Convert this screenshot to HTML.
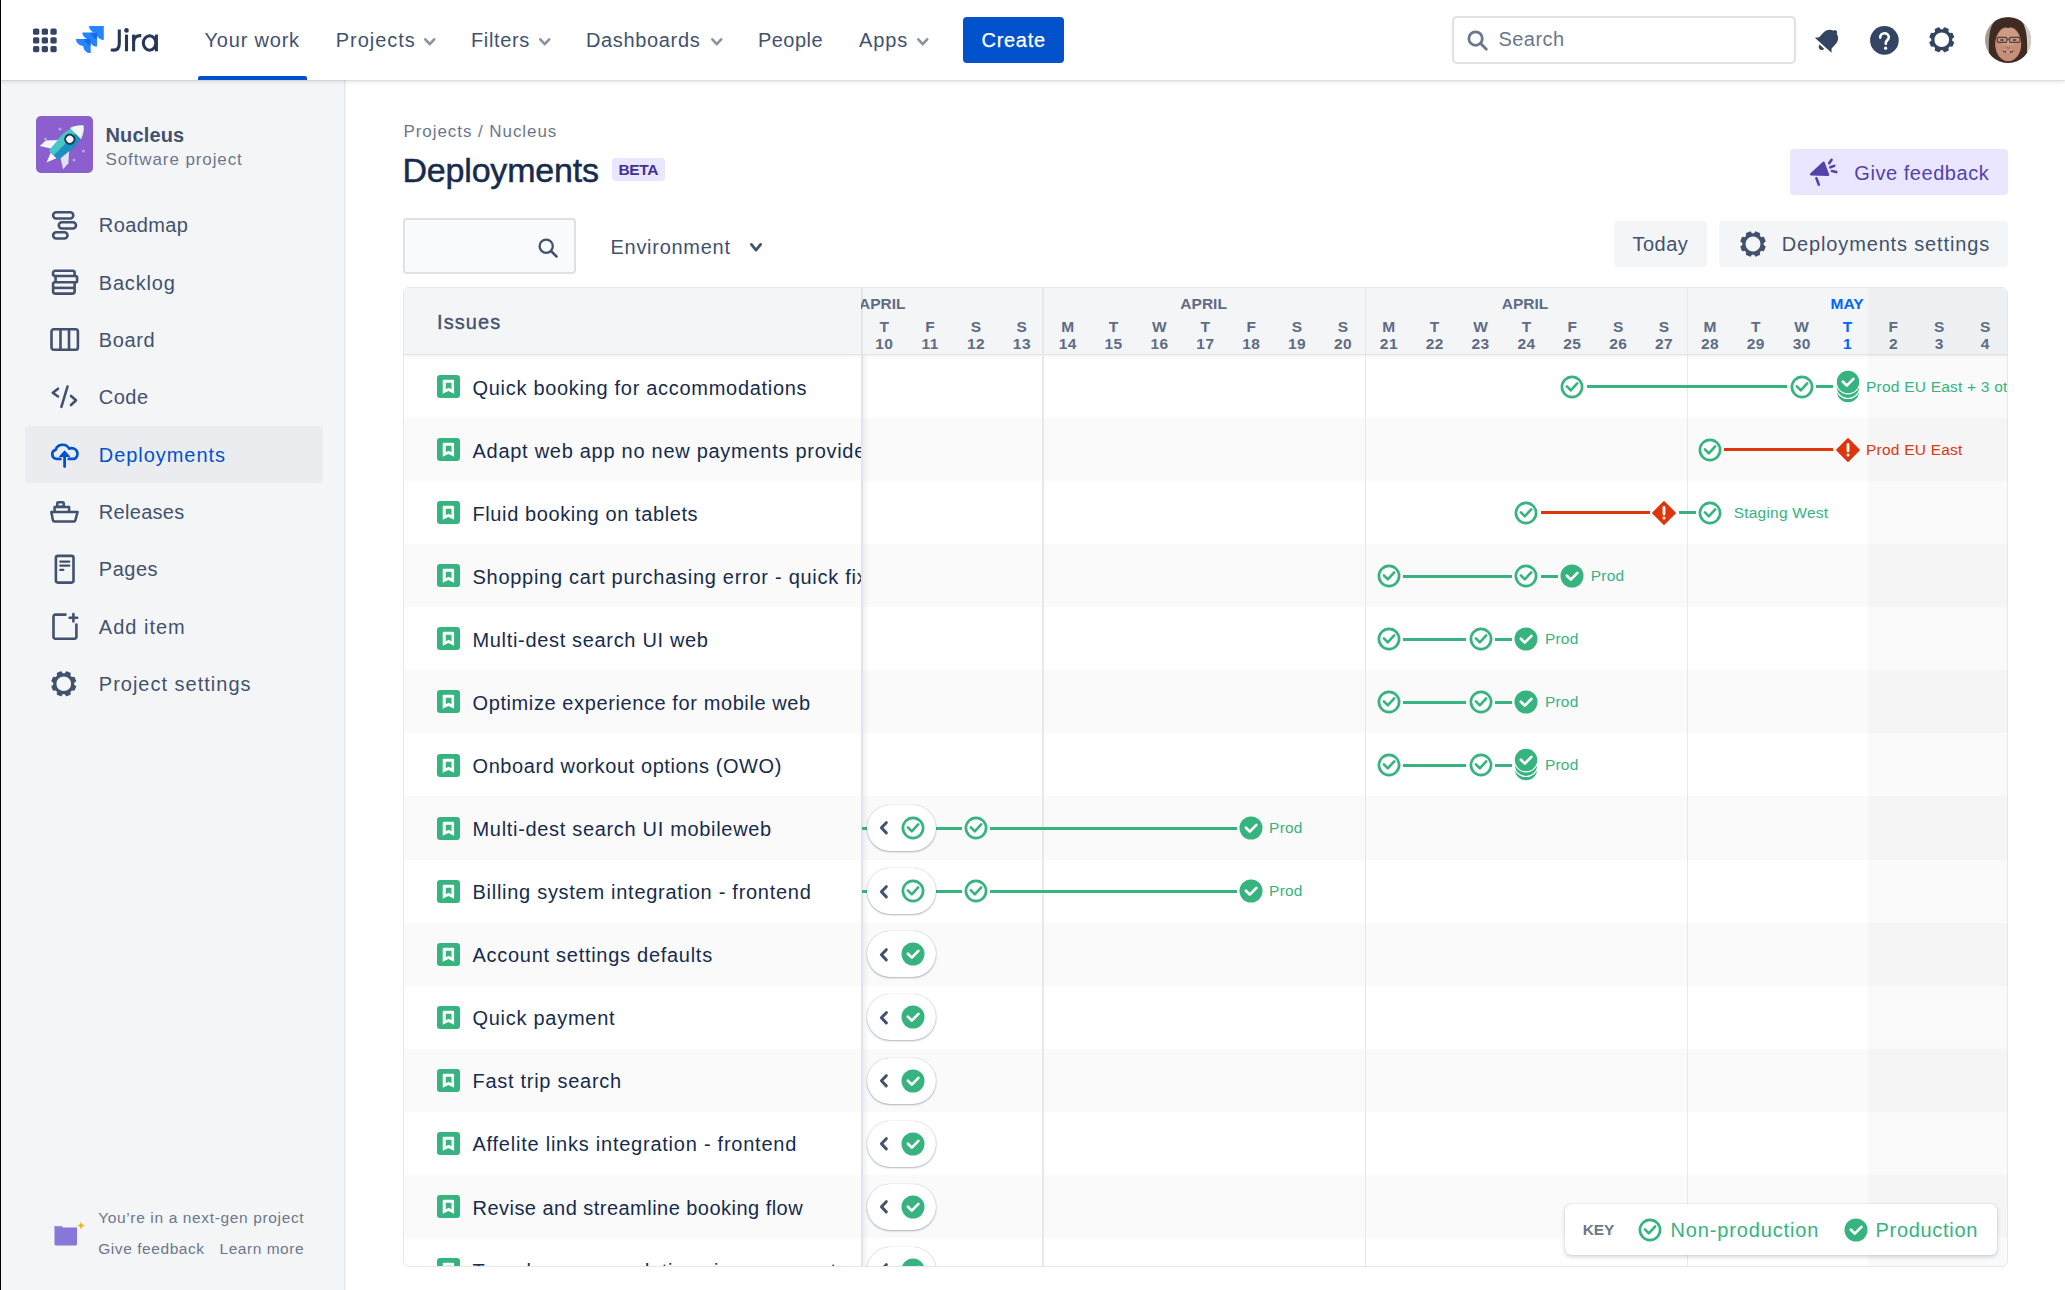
<!DOCTYPE html><html><head><meta charset="utf-8"><style>
*{box-sizing:border-box;margin:0;padding:0}
html,body{width:2065px;height:1290px;overflow:hidden;background:#fff;font-family:"Liberation Sans", sans-serif}
.t{position:absolute;white-space:nowrap}
.a{position:absolute}
svg{position:absolute;overflow:visible}
</style></head><body><div class="a" style="left:0;top:0;width:1px;height:1290px;background:#000;z-index:50"></div><div class="a" style="left:0;top:0;width:2065px;height:80px;background:#fff;z-index:10;box-shadow:0 1px 1px rgba(9,30,66,0.07),0 2px 4px rgba(9,30,66,0.11)"></div><svg style="left:0;top:0;z-index:11" width="120" height="80" fill="#344563"><rect x="33.0" y="28.5" width="6.3" height="6.3" rx="1.6"/><rect x="33.0" y="37.2" width="6.3" height="6.3" rx="1.6"/><rect x="33.0" y="45.9" width="6.3" height="6.3" rx="1.6"/><rect x="41.7" y="28.5" width="6.3" height="6.3" rx="1.6"/><rect x="41.7" y="37.2" width="6.3" height="6.3" rx="1.6"/><rect x="41.7" y="45.9" width="6.3" height="6.3" rx="1.6"/><rect x="50.4" y="28.5" width="6.3" height="6.3" rx="1.6"/><rect x="50.4" y="37.2" width="6.3" height="6.3" rx="1.6"/><rect x="50.4" y="45.9" width="6.3" height="6.3" rx="1.6"/></svg><svg style="left:0;top:0;z-index:11" width="110" height="60"><path transform="translate(89.1 26)" d="M0 0 H14.7 V14 C10.6 14 7.3 10.8 7.3 6.8 C3.3 6.8 0 3.8 0 0Z" fill="#2684FF"/><path transform="translate(82.4 32.6)" d="M0 0 H14.7 V14 C10.6 14 7.3 10.8 7.3 6.8 C3.3 6.8 0 3.8 0 0Z" fill="#2684FF"/><path transform="translate(82.4 32.6)" d="M7.9 0 H14.7 V7 C12.2 6.2 9.8 3.6 7.9 0Z" fill="#0052CC" opacity="0.45"/><path transform="translate(76 39.1)" d="M0 0 H14.7 V14 C10.6 14 7.3 10.8 7.3 6.8 C3.3 6.8 0 3.8 0 0Z" fill="#2684FF"/><path transform="translate(76 39.1)" d="M7.9 0 H14.7 V7 C12.2 6.2 9.8 3.6 7.9 0Z" fill="#0052CC" opacity="0.45"/></svg><svg style="left:0;top:0;z-index:11" width="170" height="80"><g fill="none" stroke="#253858" stroke-width="3.1">
<path d="M119.3 29.4 V43.5 C119.3 48.3 116.8 50.1 113.8 50.1 C112.6 50.1 111.6 49.9 110.9 49.6"/>
<path d="M126.5 34.6 V51.3"/><path d="M133.6 34.6 V51.3"/><path d="M133.6 41 C134.3 37 137.2 35.4 141.3 35.7"/>
<ellipse cx="149.6" cy="43" rx="6.3" ry="7.2"/><path d="M156.4 34.6 V51.3"/></g>
<circle cx="126.5" cy="30.4" r="2.3" fill="#253858"/></svg><div class="t " style="left:204.5px;top:30.0px;font-size:20px;line-height:20px;color:#42526E;font-weight:400;letter-spacing:0.8px;z-index:11">Your work</div><div class="a" style="left:198px;top:76px;width:109px;height:4px;background:#0052CC;border-radius:2px 2px 0 0;z-index:11"></div><div class="t " style="left:335.8px;top:30.0px;font-size:20px;line-height:20px;color:#42526E;font-weight:400;letter-spacing:0.95px;z-index:11">Projects</div><svg style="left:424px;top:37.5px;z-index:11" width="11.5" height="7.5"><path d="M1.3 1.3 L5.75 6.20 L10.20 1.3" fill="none" stroke="#8993A4" stroke-width="2.6" stroke-linecap="round" stroke-linejoin="round"/></svg><div class="t " style="left:471.0px;top:30.0px;font-size:20px;line-height:20px;color:#42526E;font-weight:400;letter-spacing:0.65px;z-index:11">Filters</div><svg style="left:539px;top:37.5px;z-index:11" width="11.5" height="7.5"><path d="M1.3 1.3 L5.75 6.20 L10.20 1.3" fill="none" stroke="#8993A4" stroke-width="2.6" stroke-linecap="round" stroke-linejoin="round"/></svg><div class="t " style="left:586.0px;top:30.0px;font-size:20px;line-height:20px;color:#42526E;font-weight:400;letter-spacing:0.65px;z-index:11">Dashboards</div><svg style="left:711.3px;top:37.5px;z-index:11" width="11.5" height="7.5"><path d="M1.3 1.3 L5.75 6.20 L10.20 1.3" fill="none" stroke="#8993A4" stroke-width="2.6" stroke-linecap="round" stroke-linejoin="round"/></svg><div class="t " style="left:758.0px;top:30.0px;font-size:20px;line-height:20px;color:#42526E;font-weight:400;letter-spacing:0.45px;z-index:11">People</div><div class="t " style="left:859.0px;top:30.0px;font-size:20px;line-height:20px;color:#42526E;font-weight:400;letter-spacing:0.9px;z-index:11">Apps</div><svg style="left:917.3px;top:37.5px;z-index:11" width="11.5" height="7.5"><path d="M1.3 1.3 L5.75 6.20 L10.20 1.3" fill="none" stroke="#8993A4" stroke-width="2.6" stroke-linecap="round" stroke-linejoin="round"/></svg><div class="a" style="left:963px;top:17px;width:101px;height:46px;background:#0052CC;border-radius:4px;z-index:11"></div><div class="t " style="left:981.5px;top:29.8px;font-size:20px;line-height:20px;color:#fff;font-weight:400;letter-spacing:0.7px;z-index:12;-webkit-text-stroke:0.25px #fff">Create</div><div class="a" style="left:1452px;top:16px;width:344px;height:48px;border:2.5px solid #DFE1E6;border-radius:5px;background:#fff;z-index:11"></div><svg style="left:1467px;top:30px;z-index:12" width="22" height="21"><circle cx="8.6" cy="8.6" r="6.7" fill="none" stroke="#6B778C" stroke-width="2.8"/><path d="M13.6 13.6 L19.3 19.3" stroke="#6B778C" stroke-width="2.8" stroke-linecap="round"/></svg><div class="t " style="left:1498.5px;top:29.4px;font-size:20px;line-height:20px;color:#6B778C;font-weight:400;letter-spacing:0.45px;z-index:12">Search</div><svg style="left:1814px;top:26px;z-index:12" width="28" height="28" viewBox="0 0 26 26">
<g transform="rotate(42 13 13)"><path d="M13 1.3 c1.1 0 1.9 .8 1.9 1.8 c3.7 .9 5.9 4 5.9 7.8 v5.8 l2.6 3 H2.6 l2.6 -3 v-5.8 c0 -3.8 2.2 -6.9 5.9 -7.8 c0 -1 .8 -1.8 1.9 -1.8z" fill="#344563"/>
<path d="M10 21.4 h6 c0 1.8 -1.3 3.1 -3 3.1 s-3 -1.3 -3 -3.1z" fill="#344563"/></g></svg><svg style="left:1870px;top:25.5px;z-index:12" width="29" height="29" viewBox="0 0 29 29">
<circle cx="14.4" cy="14.4" r="14.3" fill="#344563"/>
<path d="M10.2 11.6 c0-2.5 1.9-4.3 4.3-4.3 s4.3 1.7 4.3 4 c0 2.7-3 3.2-3 5.6 v.8" fill="none" stroke="#fff" stroke-width="2.6" stroke-linecap="round"/>
<circle cx="15.6" cy="22.2" r="1.6" fill="#fff"/></svg><svg style="left:1929px;top:27px;z-index:12" width="25.5" height="25.5"><g fill="#344563" stroke="#344563" stroke-width="1.33" stroke-linejoin="round"><path d="M10.10 3.98 L10.81 0.82 L14.69 0.82 L15.40 3.98Z" transform="rotate(22.5 12.75 12.75)"/><path d="M10.10 3.98 L10.81 0.82 L14.69 0.82 L15.40 3.98Z" transform="rotate(67.5 12.75 12.75)"/><path d="M10.10 3.98 L10.81 0.82 L14.69 0.82 L15.40 3.98Z" transform="rotate(112.5 12.75 12.75)"/><path d="M10.10 3.98 L10.81 0.82 L14.69 0.82 L15.40 3.98Z" transform="rotate(157.5 12.75 12.75)"/><path d="M10.10 3.98 L10.81 0.82 L14.69 0.82 L15.40 3.98Z" transform="rotate(202.5 12.75 12.75)"/><path d="M10.10 3.98 L10.81 0.82 L14.69 0.82 L15.40 3.98Z" transform="rotate(247.5 12.75 12.75)"/><path d="M10.10 3.98 L10.81 0.82 L14.69 0.82 L15.40 3.98Z" transform="rotate(292.5 12.75 12.75)"/><path d="M10.10 3.98 L10.81 0.82 L14.69 0.82 L15.40 3.98Z" transform="rotate(337.5 12.75 12.75)"/></g><circle cx="12.75" cy="12.75" r="8.93" fill="none" stroke="#344563" stroke-width="3.16"/></svg><svg style="left:1985px;top:17px;z-index:12" width="46" height="46" viewBox="0 0 46 46">
<defs><clipPath id="avc"><circle cx="23" cy="23" r="23"/></clipPath></defs>
<g clip-path="url(#avc)">
<rect width="46" height="46" fill="#A39E94"/>
<rect x="36" y="8" width="10" height="30" fill="#CFCDC6"/>
<path d="M5 46 C3 30 3 10 10 4 C15 -1 31 -1 36 4 C43 10 43 30 41 46Z" fill="#3F2B22"/>
<ellipse cx="23.2" cy="27" rx="13" ry="17.3" fill="#C68F7A"/>
<ellipse cx="23.2" cy="20" rx="10" ry="9" fill="#CE9A86"/>
<path d="M10 14 C12 7 20 5.5 23 9.5 C27 5.5 35 7 36.5 15 C33 10 27 9.5 23 11 C19 9.5 13 10 10 14Z" fill="#3F2B22"/>
<g fill="none" stroke="#4E403B" stroke-width="1.2"><rect x="12.2" y="20.4" width="9.6" height="5" rx="1.2"/><rect x="24.6" y="20.4" width="10.4" height="5" rx="1.2"/><path d="M21.8 22 H24.6"/></g>
<ellipse cx="17" cy="23" rx="2" ry="1" fill="#5a3f36"/><ellipse cx="29.5" cy="23" rx="2" ry="1" fill="#5a3f36"/>
<path d="M21.5 30.5 Q23.2 32 25 30.5" fill="none" stroke="#8a5a4a" stroke-width="1"/>
<path d="M16.5 33.5 Q23.2 39 30 33.5 Q23.2 35.5 16.5 33.5Z" fill="#6b3328"/>
<rect x="21" y="34.6" width="4" height="1.2" fill="#d8d8d0"/>
</g></svg><div class="a" style="left:1px;top:80px;width:345px;height:1210px;background:#F4F5F7;box-shadow:inset -1px 0 0 #EFF0F3,inset -2px 0 0 #E8E9ED"></div><svg style="left:36px;top:116px" width="57" height="57" viewBox="0 0 57 57">
<rect width="57" height="57" rx="5" fill="#8C5FCF"/>
<circle cx="24" cy="13" r="1.6" fill="#B89DE8"/><circle cx="9.5" cy="23" r="1.6" fill="#B89DE8"/><circle cx="47.5" cy="35" r="1.6" fill="#B89DE8"/><circle cx="38" cy="44" r="1.6" fill="#B89DE8"/><circle cx="29" cy="47.5" r="1.6" fill="#B89DE8"/>
<g transform="translate(28.5 28.5) rotate(45) translate(-28.5 -28.5)">
<path d="M28.5 1.5 C36.5 9 37.8 20 37 31 L35 44 L22 44 L20 31 C19.2 20 20.5 9 28.5 1.5Z" fill="#1A8FC0"/>
<path d="M28.5 1.5 C20.5 9 19.2 20 20 31 L22 44 L28.5 44Z" fill="#4BC6C6"/>
<path d="M28.5 1.5 C32.5 5 35 9 36.2 13 L20.8 13 C22 9 24.5 5 28.5 1.5Z" fill="#F4F5F7"/>
<path d="M34.5 13 L36.2 13 C35 9 32.5 5 28.5 1.5 C31 5 33.5 9 34.5 13Z" fill="#DDE3F0"/>
<path d="M20.5 30 L12.5 39 L12 47 L21.5 41Z" fill="#F4F5F7"/>
<path d="M36.5 30 L44.5 39 L45 47 L35.5 41Z" fill="#DDE3F0"/>
<path d="M24.5 44 L32.5 44 L28.5 54Z" fill="#F4F5F7"/>
<circle cx="28.5" cy="21" r="4.6" fill="#fff" stroke="#253858" stroke-width="2.1"/>
</g></svg><div class="t " style="left:105.5px;top:125.0px;font-size:20px;line-height:20px;color:#42526E;font-weight:700;letter-spacing:0.15px;">Nucleus</div><div class="t " style="left:105.5px;top:150.5px;font-size:17px;line-height:17px;color:#6B778C;font-weight:400;letter-spacing:0.9px;">Software project</div><div class="a" style="left:25px;top:426px;width:298px;height:57px;background:#EBECF0;border-radius:4px"></div><div class="t " style="left:98.8px;top:215.3px;font-size:20px;line-height:20px;color:#42526E;font-weight:400;letter-spacing:0.4px;">Roadmap</div><div class="t " style="left:98.8px;top:272.6px;font-size:20px;line-height:20px;color:#42526E;font-weight:400;letter-spacing:0.8px;">Backlog</div><div class="t " style="left:98.8px;top:330.0px;font-size:20px;line-height:20px;color:#42526E;font-weight:400;letter-spacing:0.6px;">Board</div><div class="t " style="left:98.8px;top:387.3px;font-size:20px;line-height:20px;color:#42526E;font-weight:400;letter-spacing:0.5px;">Code</div><div class="t " style="left:98.8px;top:444.7px;font-size:20px;line-height:20px;color:#0052CC;font-weight:400;letter-spacing:0.95px;">Deployments</div><div class="t " style="left:98.8px;top:502.0px;font-size:20px;line-height:20px;color:#42526E;font-weight:400;letter-spacing:0.3px;">Releases</div><div class="t " style="left:98.8px;top:559.4px;font-size:20px;line-height:20px;color:#42526E;font-weight:400;letter-spacing:0.5px;">Pages</div><div class="t " style="left:98.8px;top:616.7px;font-size:20px;line-height:20px;color:#42526E;font-weight:400;letter-spacing:1.0px;">Add item</div><div class="t " style="left:98.8px;top:674.1px;font-size:20px;line-height:20px;color:#42526E;font-weight:400;letter-spacing:1.0px;">Project settings</div><svg style="left:50px;top:209px" width="30" height="32"><g fill="none" stroke="#42526E" stroke-width="2.6">
<rect x="3.1" y="3.2" width="20.2" height="6.3" rx="3.15"/><rect x="8.8" y="13.2" width="17.2" height="6.3" rx="3.15"/><rect x="3.1" y="23.2" width="14.4" height="6.3" rx="3.15"/></g></svg><svg style="left:50px;top:268px" width="30" height="30"><g fill="none" stroke="#42526E" stroke-width="2.6" stroke-linejoin="round">
<path d="M3.1 8 V4.8 a2 2 0 0 1 2-2 H22.6 a2 2 0 0 1 2 2 V8"/>
<path d="M3.1 8 H25.5 a1.6 1.6 0 0 1 1.6 1.6 V12.7 a1.6 1.6 0 0 1 -1.6 1.6 H3.1"/>
<path d="M5.6 8 V14.3"/>
<path d="M3.1 14.3 V23.6 a2 2 0 0 0 2 2 H22.6 a2 2 0 0 0 2-2 V14.3"/>
<path d="M3.1 19.9 H24.6"/></g></svg><svg style="left:49px;top:327px" width="32" height="26"><g fill="none" stroke="#42526E" stroke-width="2.6">
<rect x="2.5" y="2.3" width="26.4" height="20.4" rx="2.2"/><path d="M11.5 2.3 V22.7 M20 2.3 V22.7"/></g></svg><svg style="left:50px;top:384px" width="30" height="26"><g fill="none" stroke="#42526E" stroke-width="2.6" stroke-linecap="round" stroke-linejoin="round">
<path d="M8 4.7 L2.8 8.8 L8 12.5"/><path d="M17.5 2.5 L11.4 22.8"/><path d="M21 11.9 L26 16.3 L21 21"/></g></svg><svg style="left:49px;top:440px" width="32" height="29"><g fill="none" stroke="#0052CC" stroke-width="2.7" stroke-linecap="butt" stroke-linejoin="round" transform="translate(0 1.3)">
<path d="M12.6 17.6 H7.4 A4.6 4.6 0 0 1 6.6 8.6 A7.4 7.4 0 0 1 20.2 7.4 A5.3 5.1 0 0 1 25.2 17.6 H18.6"/></g>
<path d="M15.6 26.6 V13.5" stroke="#0052CC" stroke-width="2.8" stroke-linecap="round"/><path d="M10.8 16.4 L15.6 11.2 L20.4 16.4Z" fill="#0052CC" stroke="#0052CC" stroke-width="1.2" stroke-linejoin="round"/></svg><svg style="left:49px;top:500px" width="32" height="24"><g fill="none" stroke="#42526E" stroke-width="2.5" stroke-linejoin="round">
<rect x="8.2" y="2.2" width="6.6" height="4.6" rx="1.2"/><path d="M5.6 11.8 V7.1 H20.1 V11.8"/>
<path d="M2.3 12 H28.6 L26.3 20.4 a1.4 1.4 0 0 1 -1.3 1 H5.3 a1.4 1.4 0 0 1 -1.3 -1 Z"/></g></svg><svg style="left:53px;top:553px" width="24" height="32"><g fill="none" stroke="#42526E" stroke-width="2.6">
<rect x="2.9" y="2.9" width="17.6" height="26.7" rx="2"/></g><g stroke="#42526E" stroke-width="2.3" stroke-linecap="round"><path d="M7.3 8.6 H16.3 M7.3 12.6 H16.3 M7.3 16.9 H10.3"/></g></svg><svg style="left:50px;top:611px" width="30" height="30"><g fill="none" stroke="#42526E" stroke-width="2.6" stroke-linecap="round" stroke-linejoin="round">
<path d="M15.5 3.6 H5.3 a1.8 1.8 0 0 0 -1.8 1.8 V25.9 a1.8 1.8 0 0 0 1.8 1.8 H24.6 a1.8 1.8 0 0 0 1.8 -1.8 V13.5"/>
<path d="M23.4 3 V10.5 M19.6 6.8 H27.2"/></g></svg><svg style="left:51.3px;top:670.8px;z-index:12" width="25.5" height="25.5"><g fill="#42526E" stroke="#42526E" stroke-width="1.33" stroke-linejoin="round"><path d="M10.10 3.98 L10.81 0.82 L14.69 0.82 L15.40 3.98Z" transform="rotate(22.5 12.75 12.75)"/><path d="M10.10 3.98 L10.81 0.82 L14.69 0.82 L15.40 3.98Z" transform="rotate(67.5 12.75 12.75)"/><path d="M10.10 3.98 L10.81 0.82 L14.69 0.82 L15.40 3.98Z" transform="rotate(112.5 12.75 12.75)"/><path d="M10.10 3.98 L10.81 0.82 L14.69 0.82 L15.40 3.98Z" transform="rotate(157.5 12.75 12.75)"/><path d="M10.10 3.98 L10.81 0.82 L14.69 0.82 L15.40 3.98Z" transform="rotate(202.5 12.75 12.75)"/><path d="M10.10 3.98 L10.81 0.82 L14.69 0.82 L15.40 3.98Z" transform="rotate(247.5 12.75 12.75)"/><path d="M10.10 3.98 L10.81 0.82 L14.69 0.82 L15.40 3.98Z" transform="rotate(292.5 12.75 12.75)"/><path d="M10.10 3.98 L10.81 0.82 L14.69 0.82 L15.40 3.98Z" transform="rotate(337.5 12.75 12.75)"/></g><circle cx="12.75" cy="12.75" r="8.93" fill="none" stroke="#42526E" stroke-width="3.16"/></svg><svg style="left:53px;top:1221px" width="32" height="25" viewBox="0 0 32 25">
<path d="M1.5 5 h7 l1.5 1.5 h14 v16.5 c0 .8-.6 1.5-1.5 1.5 h-19.5 c-.8 0-1.5-.7-1.5-1.5z" fill="#8777D9"/>
<path d="M1.5 5 h7 l1.5 1.5 h-8.5z" fill="#998DD9"/>
<path d="M28 0.5 l1 3 l3 1 l-3 1 l-1 3 l-1 -3 l-3 -1 l3 -1z" fill="#FFAB00"/>
</svg><div class="t " style="left:98.2px;top:1209.7px;font-size:15.5px;line-height:15.5px;color:#6B778C;font-weight:400;letter-spacing:0.64px;">You’re in a next-gen project</div><div class="t " style="left:98.2px;top:1240.9px;font-size:15.5px;line-height:15.5px;color:#6B778C;font-weight:400;letter-spacing:0.57px;">Give feedback</div><div class="t " style="left:219.6px;top:1240.9px;font-size:15.5px;line-height:15.5px;color:#6B778C;font-weight:400;letter-spacing:0.52px;">Learn more</div><div class="t " style="left:403.5px;top:123.2px;font-size:17px;line-height:17px;color:#6B778C;font-weight:400;letter-spacing:0.93px;">Projects / Nucleus</div><div class="t " style="left:402.5px;top:153.1px;font-size:34px;line-height:34px;color:#172B4D;font-weight:400;letter-spacing:-0.2px;-webkit-text-stroke:0.5px #172B4D">Deployments</div><div class="a" style="left:612px;top:157.5px;width:53px;height:23px;background:#EAE6FF;border-radius:4px"></div><div class="t " style="left:618.5px;top:161.6px;font-size:15.5px;line-height:15.5px;color:#403294;font-weight:700;letter-spacing:-0.35px;">BETA</div><div class="a" style="left:1790px;top:149px;width:218px;height:46px;background:#EAE6FF;border-radius:4px"></div><svg style="left:1808px;top:157px" width="32" height="30" viewBox="0 0 32 30">
<path d="M3 17.3 L15.6 5.6 L20.2 17.8 Z" fill="#5243AA" stroke="#5243AA" stroke-width="2.2" stroke-linejoin="round"/>
<path d="M8.4 21.3 L10.8 27.6" stroke="#5243AA" stroke-width="2.6" stroke-linecap="round"/>
<path d="M23.6 2.8 L21.2 6.3 M26.2 8.9 L22.3 10.3 M28.3 15.1 L23.9 14" stroke="#5243AA" stroke-width="2.6" stroke-linecap="round"/>
</svg><div class="t " style="left:1854.3px;top:162.5px;font-size:20px;line-height:20px;color:#5243AA;font-weight:400;letter-spacing:0.55px;">Give feedback</div><div class="a" style="left:403px;top:218px;width:173px;height:56px;border:2.5px solid #DFE1E6;border-radius:4px;background:#FAFBFC"></div><svg style="left:538px;top:237.5px" width="21" height="20"><circle cx="8.2" cy="8.2" r="6.6" fill="none" stroke="#42526E" stroke-width="2.3"/><path d="M13 13 L18.5 18.5" stroke="#42526E" stroke-width="2.5" stroke-linecap="round"/></svg><div class="t " style="left:610.5px;top:236.9px;font-size:20px;line-height:20px;color:#42526E;font-weight:400;letter-spacing:0.72px;">Environment</div><svg style="left:749.5px;top:243px;z-index:11" width="12" height="8.5"><path d="M1.4 1.4 L6.00 7.10 L10.60 1.4" fill="none" stroke="#42526E" stroke-width="2.8" stroke-linecap="round" stroke-linejoin="round"/></svg><div class="a" style="left:1614px;top:221px;width:93px;height:46px;background:#F4F5F7;border-radius:4px"></div><div class="t " style="left:1632.5px;top:234.1px;font-size:20px;line-height:20px;color:#42526E;font-weight:400;letter-spacing:0.5px;">Today</div><div class="a" style="left:1719px;top:221px;width:289px;height:46px;background:#F4F5F7;border-radius:4px"></div><svg style="left:1739.5px;top:230.5px;z-index:12" width="26" height="26"><g fill="#42526E" stroke="#42526E" stroke-width="1.35" stroke-linejoin="round"><path d="M10.30 4.06 L11.02 0.83 L14.98 0.83 L15.70 4.06Z" transform="rotate(22.5 13.0 13.0)"/><path d="M10.30 4.06 L11.02 0.83 L14.98 0.83 L15.70 4.06Z" transform="rotate(67.5 13.0 13.0)"/><path d="M10.30 4.06 L11.02 0.83 L14.98 0.83 L15.70 4.06Z" transform="rotate(112.5 13.0 13.0)"/><path d="M10.30 4.06 L11.02 0.83 L14.98 0.83 L15.70 4.06Z" transform="rotate(157.5 13.0 13.0)"/><path d="M10.30 4.06 L11.02 0.83 L14.98 0.83 L15.70 4.06Z" transform="rotate(202.5 13.0 13.0)"/><path d="M10.30 4.06 L11.02 0.83 L14.98 0.83 L15.70 4.06Z" transform="rotate(247.5 13.0 13.0)"/><path d="M10.30 4.06 L11.02 0.83 L14.98 0.83 L15.70 4.06Z" transform="rotate(292.5 13.0 13.0)"/><path d="M10.30 4.06 L11.02 0.83 L14.98 0.83 L15.70 4.06Z" transform="rotate(337.5 13.0 13.0)"/></g><circle cx="13.0" cy="13.0" r="9.10" fill="none" stroke="#42526E" stroke-width="3.22"/></svg><div class="t " style="left:1781.8px;top:234.1px;font-size:20px;line-height:20px;color:#42526E;font-weight:400;letter-spacing:0.85px;">Deployments settings</div><div class="a" style="left:403px;top:287px;width:1605px;height:980px;border:1px solid #E5E7EB;border-radius:6px;overflow:hidden;background:#fff"><div class="a" style="left:0.00px;top:0.00px;width:2100.00px;height:67.00px;background:#F4F5F7"></div><div class="a" style="left:0.00px;top:130.07px;width:2100.00px;height:63.07px;background:#FAFAFA"></div><div class="a" style="left:0.00px;top:256.21px;width:2100.00px;height:63.07px;background:#FAFAFA"></div><div class="a" style="left:0.00px;top:382.35px;width:2100.00px;height:63.07px;background:#FAFAFA"></div><div class="a" style="left:0.00px;top:508.49px;width:2100.00px;height:63.07px;background:#FAFAFA"></div><div class="a" style="left:0.00px;top:634.63px;width:2100.00px;height:63.07px;background:#FAFAFA"></div><div class="a" style="left:0.00px;top:760.77px;width:2100.00px;height:63.07px;background:#FAFAFA"></div><div class="a" style="left:0.00px;top:886.91px;width:2100.00px;height:63.07px;background:#FAFAFA"></div><div class="a" style="left:0.00px;top:65.80px;width:2100.00px;height:1.40px;background:#E2E4E9"></div><div class="a" style="left:0.00px;top:67.20px;width:2100.00px;height:2.50px;background:linear-gradient(rgba(9,30,66,0.05),rgba(9,30,66,0))"></div><div class="a" style="left:1464.00px;top:0.00px;width:300.00px;height:1290.00px;background:rgba(10,30,20,0.022)"></div><div class="a" style="left:638.30px;top:0.00px;width:1.30px;height:1290.00px;background:#E6E8EC"></div><div class="a" style="left:960.90px;top:0.00px;width:1.30px;height:1290.00px;background:#E6E8EC"></div><div class="a" style="left:1283.00px;top:0.00px;width:1.30px;height:1290.00px;background:#E6E8EC"></div><div class="a" style="left:457.00px;top:0.00px;width:1.60px;height:1290.00px;background:#E2E4E9"></div><div class="a" style="left:458.60px;top:67.00px;width:6.00px;height:1290.00px;background:linear-gradient(90deg,rgba(9,30,66,0.06),rgba(9,30,66,0))"></div><div class="t " style="left:33.0px;top:23.9px;font-size:20px;line-height:20px;color:#42526E;font-weight:400;letter-spacing:1.1px;-webkit-text-stroke:0.35px #42526E">Issues</div><div class="t" style="left:450.3px;top:30.9px;width:60px;text-align:center;font-size:15.5px;line-height:15.5px;font-weight:700;color:#5E6C84;letter-spacing:0.2px">T</div><div class="t" style="left:450.3px;top:48.1px;width:60px;text-align:center;font-size:15.5px;line-height:15.5px;font-weight:700;color:#5E6C84;letter-spacing:0.4px">10</div><div class="t" style="left:496.2px;top:30.9px;width:60px;text-align:center;font-size:15.5px;line-height:15.5px;font-weight:700;color:#5E6C84;letter-spacing:0.2px">F</div><div class="t" style="left:496.2px;top:48.1px;width:60px;text-align:center;font-size:15.5px;line-height:15.5px;font-weight:700;color:#5E6C84;letter-spacing:0.4px">11</div><div class="t" style="left:542.0px;top:30.9px;width:60px;text-align:center;font-size:15.5px;line-height:15.5px;font-weight:700;color:#5E6C84;letter-spacing:0.2px">S</div><div class="t" style="left:542.0px;top:48.1px;width:60px;text-align:center;font-size:15.5px;line-height:15.5px;font-weight:700;color:#5E6C84;letter-spacing:0.4px">12</div><div class="t" style="left:587.9px;top:30.9px;width:60px;text-align:center;font-size:15.5px;line-height:15.5px;font-weight:700;color:#5E6C84;letter-spacing:0.2px">S</div><div class="t" style="left:587.9px;top:48.1px;width:60px;text-align:center;font-size:15.5px;line-height:15.5px;font-weight:700;color:#5E6C84;letter-spacing:0.4px">13</div><div class="t" style="left:633.8px;top:30.9px;width:60px;text-align:center;font-size:15.5px;line-height:15.5px;font-weight:700;color:#5E6C84;letter-spacing:0.2px">M</div><div class="t" style="left:633.8px;top:48.1px;width:60px;text-align:center;font-size:15.5px;line-height:15.5px;font-weight:700;color:#5E6C84;letter-spacing:0.4px">14</div><div class="t" style="left:679.6px;top:30.9px;width:60px;text-align:center;font-size:15.5px;line-height:15.5px;font-weight:700;color:#5E6C84;letter-spacing:0.2px">T</div><div class="t" style="left:679.6px;top:48.1px;width:60px;text-align:center;font-size:15.5px;line-height:15.5px;font-weight:700;color:#5E6C84;letter-spacing:0.4px">15</div><div class="t" style="left:725.5px;top:30.9px;width:60px;text-align:center;font-size:15.5px;line-height:15.5px;font-weight:700;color:#5E6C84;letter-spacing:0.2px">W</div><div class="t" style="left:725.5px;top:48.1px;width:60px;text-align:center;font-size:15.5px;line-height:15.5px;font-weight:700;color:#5E6C84;letter-spacing:0.4px">16</div><div class="t" style="left:771.4px;top:30.9px;width:60px;text-align:center;font-size:15.5px;line-height:15.5px;font-weight:700;color:#5E6C84;letter-spacing:0.2px">T</div><div class="t" style="left:771.4px;top:48.1px;width:60px;text-align:center;font-size:15.5px;line-height:15.5px;font-weight:700;color:#5E6C84;letter-spacing:0.4px">17</div><div class="t" style="left:817.3px;top:30.9px;width:60px;text-align:center;font-size:15.5px;line-height:15.5px;font-weight:700;color:#5E6C84;letter-spacing:0.2px">F</div><div class="t" style="left:817.3px;top:48.1px;width:60px;text-align:center;font-size:15.5px;line-height:15.5px;font-weight:700;color:#5E6C84;letter-spacing:0.4px">18</div><div class="t" style="left:863.1px;top:30.9px;width:60px;text-align:center;font-size:15.5px;line-height:15.5px;font-weight:700;color:#5E6C84;letter-spacing:0.2px">S</div><div class="t" style="left:863.1px;top:48.1px;width:60px;text-align:center;font-size:15.5px;line-height:15.5px;font-weight:700;color:#5E6C84;letter-spacing:0.4px">19</div><div class="t" style="left:909.0px;top:30.9px;width:60px;text-align:center;font-size:15.5px;line-height:15.5px;font-weight:700;color:#5E6C84;letter-spacing:0.2px">S</div><div class="t" style="left:909.0px;top:48.1px;width:60px;text-align:center;font-size:15.5px;line-height:15.5px;font-weight:700;color:#5E6C84;letter-spacing:0.4px">20</div><div class="t" style="left:954.9px;top:30.9px;width:60px;text-align:center;font-size:15.5px;line-height:15.5px;font-weight:700;color:#5E6C84;letter-spacing:0.2px">M</div><div class="t" style="left:954.9px;top:48.1px;width:60px;text-align:center;font-size:15.5px;line-height:15.5px;font-weight:700;color:#5E6C84;letter-spacing:0.4px">21</div><div class="t" style="left:1000.7px;top:30.9px;width:60px;text-align:center;font-size:15.5px;line-height:15.5px;font-weight:700;color:#5E6C84;letter-spacing:0.2px">T</div><div class="t" style="left:1000.7px;top:48.1px;width:60px;text-align:center;font-size:15.5px;line-height:15.5px;font-weight:700;color:#5E6C84;letter-spacing:0.4px">22</div><div class="t" style="left:1046.6px;top:30.9px;width:60px;text-align:center;font-size:15.5px;line-height:15.5px;font-weight:700;color:#5E6C84;letter-spacing:0.2px">W</div><div class="t" style="left:1046.6px;top:48.1px;width:60px;text-align:center;font-size:15.5px;line-height:15.5px;font-weight:700;color:#5E6C84;letter-spacing:0.4px">23</div><div class="t" style="left:1092.5px;top:30.9px;width:60px;text-align:center;font-size:15.5px;line-height:15.5px;font-weight:700;color:#5E6C84;letter-spacing:0.2px">T</div><div class="t" style="left:1092.5px;top:48.1px;width:60px;text-align:center;font-size:15.5px;line-height:15.5px;font-weight:700;color:#5E6C84;letter-spacing:0.4px">24</div><div class="t" style="left:1138.3px;top:30.9px;width:60px;text-align:center;font-size:15.5px;line-height:15.5px;font-weight:700;color:#5E6C84;letter-spacing:0.2px">F</div><div class="t" style="left:1138.3px;top:48.1px;width:60px;text-align:center;font-size:15.5px;line-height:15.5px;font-weight:700;color:#5E6C84;letter-spacing:0.4px">25</div><div class="t" style="left:1184.2px;top:30.9px;width:60px;text-align:center;font-size:15.5px;line-height:15.5px;font-weight:700;color:#5E6C84;letter-spacing:0.2px">S</div><div class="t" style="left:1184.2px;top:48.1px;width:60px;text-align:center;font-size:15.5px;line-height:15.5px;font-weight:700;color:#5E6C84;letter-spacing:0.4px">26</div><div class="t" style="left:1230.1px;top:30.9px;width:60px;text-align:center;font-size:15.5px;line-height:15.5px;font-weight:700;color:#5E6C84;letter-spacing:0.2px">S</div><div class="t" style="left:1230.1px;top:48.1px;width:60px;text-align:center;font-size:15.5px;line-height:15.5px;font-weight:700;color:#5E6C84;letter-spacing:0.4px">27</div><div class="t" style="left:1276.0px;top:30.9px;width:60px;text-align:center;font-size:15.5px;line-height:15.5px;font-weight:700;color:#5E6C84;letter-spacing:0.2px">M</div><div class="t" style="left:1276.0px;top:48.1px;width:60px;text-align:center;font-size:15.5px;line-height:15.5px;font-weight:700;color:#5E6C84;letter-spacing:0.4px">28</div><div class="t" style="left:1321.8px;top:30.9px;width:60px;text-align:center;font-size:15.5px;line-height:15.5px;font-weight:700;color:#5E6C84;letter-spacing:0.2px">T</div><div class="t" style="left:1321.8px;top:48.1px;width:60px;text-align:center;font-size:15.5px;line-height:15.5px;font-weight:700;color:#5E6C84;letter-spacing:0.4px">29</div><div class="t" style="left:1367.7px;top:30.9px;width:60px;text-align:center;font-size:15.5px;line-height:15.5px;font-weight:700;color:#5E6C84;letter-spacing:0.2px">W</div><div class="t" style="left:1367.7px;top:48.1px;width:60px;text-align:center;font-size:15.5px;line-height:15.5px;font-weight:700;color:#5E6C84;letter-spacing:0.4px">30</div><div class="t" style="left:1413.6px;top:30.9px;width:60px;text-align:center;font-size:15.5px;line-height:15.5px;font-weight:700;color:#0065FF;letter-spacing:0.2px">T</div><div class="t" style="left:1413.6px;top:48.1px;width:60px;text-align:center;font-size:15.5px;line-height:15.5px;font-weight:700;color:#0065FF;letter-spacing:0.4px">1</div><div class="t" style="left:1459.4px;top:30.9px;width:60px;text-align:center;font-size:15.5px;line-height:15.5px;font-weight:700;color:#5E6C84;letter-spacing:0.2px">F</div><div class="t" style="left:1459.4px;top:48.1px;width:60px;text-align:center;font-size:15.5px;line-height:15.5px;font-weight:700;color:#5E6C84;letter-spacing:0.4px">2</div><div class="t" style="left:1505.3px;top:30.9px;width:60px;text-align:center;font-size:15.5px;line-height:15.5px;font-weight:700;color:#5E6C84;letter-spacing:0.2px">S</div><div class="t" style="left:1505.3px;top:48.1px;width:60px;text-align:center;font-size:15.5px;line-height:15.5px;font-weight:700;color:#5E6C84;letter-spacing:0.4px">3</div><div class="t" style="left:1551.2px;top:30.9px;width:60px;text-align:center;font-size:15.5px;line-height:15.5px;font-weight:700;color:#5E6C84;letter-spacing:0.2px">S</div><div class="t" style="left:1551.2px;top:48.1px;width:60px;text-align:center;font-size:15.5px;line-height:15.5px;font-weight:700;color:#5E6C84;letter-spacing:0.4px">4</div><div class="a" style="left:457.0px;top:0;width:1300px;height:60px;overflow:hidden"><div class="t" style="left:-38.7px;top:7.8px;width:120px;text-align:center;font-size:15.5px;line-height:15.5px;font-weight:700;color:#5E6C84;letter-spacing:0px">APRIL</div><div class="t" style="left:282.6px;top:7.8px;width:120px;text-align:center;font-size:15.5px;line-height:15.5px;font-weight:700;color:#5E6C84;letter-spacing:0px">APRIL</div><div class="t" style="left:604.0px;top:7.8px;width:120px;text-align:center;font-size:15.5px;line-height:15.5px;font-weight:700;color:#5E6C84;letter-spacing:0px">APRIL</div><div class="t" style="left:926.0px;top:7.8px;width:120px;text-align:center;font-size:15.5px;line-height:15.5px;font-weight:700;color:#0065FF;letter-spacing:0px">MAY</div></div><div class="a" style="left:0;top:0;width:457.0px;height:1290px;overflow:hidden"><svg style="left:33.1px;top:87.0px" width="23" height="23" viewBox="0 0 23 23"><rect width="23" height="23" rx="3.2" fill="#36B37E"/><path d="M5.7 5.8 a1.1 1.1 0 0 1 1.1 -1.1 h9.2 a1.1 1.1 0 0 1 1.1 1.1 V18.7 L11.4 15.9 L5.7 18.7z" fill="#fff"/><path d="M8.8 7.7 h5.7 v6.6 l-2.85 -1.6 l-2.85 1.6z" fill="#36B37E"/></svg><div class="t " style="left:68.5px;top:89.6px;font-size:20px;line-height:20px;color:#172B4D;font-weight:400;letter-spacing:0.7px;">Quick booking for accommodations</div><svg style="left:33.1px;top:150.1px" width="23" height="23" viewBox="0 0 23 23"><rect width="23" height="23" rx="3.2" fill="#36B37E"/><path d="M5.7 5.8 a1.1 1.1 0 0 1 1.1 -1.1 h9.2 a1.1 1.1 0 0 1 1.1 1.1 V18.7 L11.4 15.9 L5.7 18.7z" fill="#fff"/><path d="M8.8 7.7 h5.7 v6.6 l-2.85 -1.6 l-2.85 1.6z" fill="#36B37E"/></svg><div class="t " style="left:68.5px;top:152.7px;font-size:20px;line-height:20px;color:#172B4D;font-weight:400;letter-spacing:0.72px;">Adapt web app no new payments provider</div><svg style="left:33.1px;top:213.2px" width="23" height="23" viewBox="0 0 23 23"><rect width="23" height="23" rx="3.2" fill="#36B37E"/><path d="M5.7 5.8 a1.1 1.1 0 0 1 1.1 -1.1 h9.2 a1.1 1.1 0 0 1 1.1 1.1 V18.7 L11.4 15.9 L5.7 18.7z" fill="#fff"/><path d="M8.8 7.7 h5.7 v6.6 l-2.85 -1.6 l-2.85 1.6z" fill="#36B37E"/></svg><div class="t " style="left:68.5px;top:215.7px;font-size:20px;line-height:20px;color:#172B4D;font-weight:400;letter-spacing:0.6px;">Fluid booking on tablets</div><svg style="left:33.1px;top:276.2px" width="23" height="23" viewBox="0 0 23 23"><rect width="23" height="23" rx="3.2" fill="#36B37E"/><path d="M5.7 5.8 a1.1 1.1 0 0 1 1.1 -1.1 h9.2 a1.1 1.1 0 0 1 1.1 1.1 V18.7 L11.4 15.9 L5.7 18.7z" fill="#fff"/><path d="M8.8 7.7 h5.7 v6.6 l-2.85 -1.6 l-2.85 1.6z" fill="#36B37E"/></svg><div class="t " style="left:68.5px;top:278.8px;font-size:20px;line-height:20px;color:#172B4D;font-weight:400;letter-spacing:0.72px;">Shopping cart purchasing error - quick fix</div><svg style="left:33.1px;top:339.3px" width="23" height="23" viewBox="0 0 23 23"><rect width="23" height="23" rx="3.2" fill="#36B37E"/><path d="M5.7 5.8 a1.1 1.1 0 0 1 1.1 -1.1 h9.2 a1.1 1.1 0 0 1 1.1 1.1 V18.7 L11.4 15.9 L5.7 18.7z" fill="#fff"/><path d="M8.8 7.7 h5.7 v6.6 l-2.85 -1.6 l-2.85 1.6z" fill="#36B37E"/></svg><div class="t " style="left:68.5px;top:341.9px;font-size:20px;line-height:20px;color:#172B4D;font-weight:400;letter-spacing:0.67px;">Multi-dest search UI web</div><svg style="left:33.1px;top:402.4px" width="23" height="23" viewBox="0 0 23 23"><rect width="23" height="23" rx="3.2" fill="#36B37E"/><path d="M5.7 5.8 a1.1 1.1 0 0 1 1.1 -1.1 h9.2 a1.1 1.1 0 0 1 1.1 1.1 V18.7 L11.4 15.9 L5.7 18.7z" fill="#fff"/><path d="M8.8 7.7 h5.7 v6.6 l-2.85 -1.6 l-2.85 1.6z" fill="#36B37E"/></svg><div class="t " style="left:68.5px;top:405.0px;font-size:20px;line-height:20px;color:#172B4D;font-weight:400;letter-spacing:0.6px;">Optimize experience for mobile web</div><svg style="left:33.1px;top:465.5px" width="23" height="23" viewBox="0 0 23 23"><rect width="23" height="23" rx="3.2" fill="#36B37E"/><path d="M5.7 5.8 a1.1 1.1 0 0 1 1.1 -1.1 h9.2 a1.1 1.1 0 0 1 1.1 1.1 V18.7 L11.4 15.9 L5.7 18.7z" fill="#fff"/><path d="M8.8 7.7 h5.7 v6.6 l-2.85 -1.6 l-2.85 1.6z" fill="#36B37E"/></svg><div class="t " style="left:68.5px;top:468.0px;font-size:20px;line-height:20px;color:#172B4D;font-weight:400;letter-spacing:0.59px;">Onboard workout options (OWO)</div><svg style="left:33.1px;top:528.5px" width="23" height="23" viewBox="0 0 23 23"><rect width="23" height="23" rx="3.2" fill="#36B37E"/><path d="M5.7 5.8 a1.1 1.1 0 0 1 1.1 -1.1 h9.2 a1.1 1.1 0 0 1 1.1 1.1 V18.7 L11.4 15.9 L5.7 18.7z" fill="#fff"/><path d="M8.8 7.7 h5.7 v6.6 l-2.85 -1.6 l-2.85 1.6z" fill="#36B37E"/></svg><div class="t " style="left:68.5px;top:531.1px;font-size:20px;line-height:20px;color:#172B4D;font-weight:400;letter-spacing:0.68px;">Multi-dest search UI mobileweb</div><svg style="left:33.1px;top:591.6px" width="23" height="23" viewBox="0 0 23 23"><rect width="23" height="23" rx="3.2" fill="#36B37E"/><path d="M5.7 5.8 a1.1 1.1 0 0 1 1.1 -1.1 h9.2 a1.1 1.1 0 0 1 1.1 1.1 V18.7 L11.4 15.9 L5.7 18.7z" fill="#fff"/><path d="M8.8 7.7 h5.7 v6.6 l-2.85 -1.6 l-2.85 1.6z" fill="#36B37E"/></svg><div class="t " style="left:68.5px;top:594.2px;font-size:20px;line-height:20px;color:#172B4D;font-weight:400;letter-spacing:0.72px;">Billing system integration - frontend</div><svg style="left:33.1px;top:654.7px" width="23" height="23" viewBox="0 0 23 23"><rect width="23" height="23" rx="3.2" fill="#36B37E"/><path d="M5.7 5.8 a1.1 1.1 0 0 1 1.1 -1.1 h9.2 a1.1 1.1 0 0 1 1.1 1.1 V18.7 L11.4 15.9 L5.7 18.7z" fill="#fff"/><path d="M8.8 7.7 h5.7 v6.6 l-2.85 -1.6 l-2.85 1.6z" fill="#36B37E"/></svg><div class="t " style="left:68.5px;top:657.2px;font-size:20px;line-height:20px;color:#172B4D;font-weight:400;letter-spacing:0.72px;">Account settings defaults</div><svg style="left:33.1px;top:717.7px" width="23" height="23" viewBox="0 0 23 23"><rect width="23" height="23" rx="3.2" fill="#36B37E"/><path d="M5.7 5.8 a1.1 1.1 0 0 1 1.1 -1.1 h9.2 a1.1 1.1 0 0 1 1.1 1.1 V18.7 L11.4 15.9 L5.7 18.7z" fill="#fff"/><path d="M8.8 7.7 h5.7 v6.6 l-2.85 -1.6 l-2.85 1.6z" fill="#36B37E"/></svg><div class="t " style="left:68.5px;top:720.3px;font-size:20px;line-height:20px;color:#172B4D;font-weight:400;letter-spacing:0.72px;">Quick payment</div><svg style="left:33.1px;top:780.8px" width="23" height="23" viewBox="0 0 23 23"><rect width="23" height="23" rx="3.2" fill="#36B37E"/><path d="M5.7 5.8 a1.1 1.1 0 0 1 1.1 -1.1 h9.2 a1.1 1.1 0 0 1 1.1 1.1 V18.7 L11.4 15.9 L5.7 18.7z" fill="#fff"/><path d="M8.8 7.7 h5.7 v6.6 l-2.85 -1.6 l-2.85 1.6z" fill="#36B37E"/></svg><div class="t " style="left:68.5px;top:783.4px;font-size:20px;line-height:20px;color:#172B4D;font-weight:400;letter-spacing:0.72px;">Fast trip search</div><svg style="left:33.1px;top:843.9px" width="23" height="23" viewBox="0 0 23 23"><rect width="23" height="23" rx="3.2" fill="#36B37E"/><path d="M5.7 5.8 a1.1 1.1 0 0 1 1.1 -1.1 h9.2 a1.1 1.1 0 0 1 1.1 1.1 V18.7 L11.4 15.9 L5.7 18.7z" fill="#fff"/><path d="M8.8 7.7 h5.7 v6.6 l-2.85 -1.6 l-2.85 1.6z" fill="#36B37E"/></svg><div class="t " style="left:68.5px;top:846.4px;font-size:20px;line-height:20px;color:#172B4D;font-weight:400;letter-spacing:0.76px;">Affelite links integration - frontend</div><svg style="left:33.1px;top:906.9px" width="23" height="23" viewBox="0 0 23 23"><rect width="23" height="23" rx="3.2" fill="#36B37E"/><path d="M5.7 5.8 a1.1 1.1 0 0 1 1.1 -1.1 h9.2 a1.1 1.1 0 0 1 1.1 1.1 V18.7 L11.4 15.9 L5.7 18.7z" fill="#fff"/><path d="M8.8 7.7 h5.7 v6.6 l-2.85 -1.6 l-2.85 1.6z" fill="#36B37E"/></svg><div class="t " style="left:68.5px;top:909.5px;font-size:20px;line-height:20px;color:#172B4D;font-weight:400;letter-spacing:0.47px;">Revise and streamline booking flow</div><svg style="left:33.1px;top:970.0px" width="23" height="23" viewBox="0 0 23 23"><rect width="23" height="23" rx="3.2" fill="#36B37E"/><path d="M5.7 5.8 a1.1 1.1 0 0 1 1.1 -1.1 h9.2 a1.1 1.1 0 0 1 1.1 1.1 V18.7 L11.4 15.9 L5.7 18.7z" fill="#fff"/><path d="M8.8 7.7 h5.7 v6.6 l-2.85 -1.6 l-2.85 1.6z" fill="#36B37E"/></svg><div class="t " style="left:68.5px;top:972.6px;font-size:20px;line-height:20px;color:#172B4D;font-weight:400;letter-spacing:0.72px;">Travel recommendations in a new cart</div></div><div class="a" style="left:1182.85px;top:97.29px;width:200.55px;height:3.00px;background:#36B37E"></div><div class="a" style="left:1412.00px;top:97.29px;width:16.77px;height:3.00px;background:#36B37E"></div><svg style="left:1156.35px;top:86.79px" width="24" height="24"><circle cx="12" cy="12" r="10.1" fill="#fff" stroke="#36B37E" stroke-width="2.7"/><path d="M6.9 11.4 L10.8 15.3 L17.2 8.4" fill="none" stroke="#36B37E" stroke-width="2.6" stroke-linecap="round" stroke-linejoin="round"/></svg><svg style="left:1385.70px;top:86.79px" width="24" height="24"><circle cx="12" cy="12" r="10.1" fill="#fff" stroke="#36B37E" stroke-width="2.7"/><path d="M6.9 11.4 L10.8 15.3 L17.2 8.4" fill="none" stroke="#36B37E" stroke-width="2.6" stroke-linecap="round" stroke-linejoin="round"/></svg><svg style="left:1430.57px;top:80.99px" width="26" height="36"><circle cx="13" cy="22.1" r="11.2" fill="#36B37E"/><circle cx="13" cy="17.7" r="12.4" fill="#fff"/><circle cx="13" cy="17.7" r="11.2" fill="#36B37E"/><circle cx="13" cy="13" r="12.4" fill="#fff"/><circle cx="13" cy="13" r="11.2" fill="#36B37E"/><path d="M7.9 12.7 L11.8 16.6 L18.4 9.9" fill="none" stroke="#fff" stroke-width="2.7" stroke-linecap="round" stroke-linejoin="round"/></svg><div class="t " style="left:1462.0px;top:90.6px;font-size:15.5px;line-height:15.5px;color:#36B37E;font-weight:400;letter-spacing:0.22px;">Prod EU East + 3 others</div><div class="a" style="left:1320.46px;top:160.36px;width:108.61px;height:3.00px;background:#DE350B"></div><svg style="left:1293.96px;top:149.86px" width="24" height="24"><circle cx="12" cy="12" r="10.1" fill="#fff" stroke="#36B37E" stroke-width="2.7"/><path d="M6.9 11.4 L10.8 15.3 L17.2 8.4" fill="none" stroke="#36B37E" stroke-width="2.6" stroke-linecap="round" stroke-linejoin="round"/></svg><svg style="left:1431.57px;top:149.86px" width="24" height="24"><path d="M12 0.8 L23.2 12 L12 23.2 L0.8 12Z" fill="#DE350B" stroke="#DE350B" stroke-width="1.5" stroke-linejoin="round"/><path d="M12 6.5 V13" stroke="#fff" stroke-width="2.8" stroke-linecap="round"/><circle cx="12" cy="17" r="1.5" fill="#fff"/></svg><div class="t " style="left:1462.0px;top:153.6px;font-size:15.5px;line-height:15.5px;color:#DE350B;font-weight:400;letter-spacing:0.22px;">Prod EU East</div><div class="a" style="left:1137.18px;top:223.42px;width:108.91px;height:3.00px;background:#DE350B"></div><div class="a" style="left:1274.89px;top:223.42px;width:16.77px;height:3.00px;background:#36B37E"></div><svg style="left:1110.48px;top:212.92px" width="24" height="24"><circle cx="12" cy="12" r="10.1" fill="#fff" stroke="#36B37E" stroke-width="2.7"/><path d="M6.9 11.4 L10.8 15.3 L17.2 8.4" fill="none" stroke="#36B37E" stroke-width="2.6" stroke-linecap="round" stroke-linejoin="round"/></svg><svg style="left:1248.09px;top:212.92px" width="24" height="24"><path d="M12 0.8 L23.2 12 L12 23.2 L0.8 12Z" fill="#DE350B" stroke="#DE350B" stroke-width="1.5" stroke-linejoin="round"/><path d="M12 6.5 V13" stroke="#fff" stroke-width="2.8" stroke-linecap="round"/><circle cx="12" cy="17" r="1.5" fill="#fff"/></svg><svg style="left:1293.96px;top:212.92px" width="24" height="24"><circle cx="12" cy="12" r="10.1" fill="#fff" stroke="#36B37E" stroke-width="2.7"/><path d="M6.9 11.4 L10.8 15.3 L17.2 8.4" fill="none" stroke="#36B37E" stroke-width="2.6" stroke-linecap="round" stroke-linejoin="round"/></svg><div class="t " style="left:1329.7px;top:216.7px;font-size:15.5px;line-height:15.5px;color:#36B37E;font-weight:400;letter-spacing:0.22px;">Staging West</div><div class="a" style="left:999.37px;top:286.50px;width:108.61px;height:3.00px;background:#36B37E"></div><div class="a" style="left:1136.98px;top:286.50px;width:16.87px;height:3.00px;background:#36B37E"></div><svg style="left:972.87px;top:276.00px" width="24" height="24"><circle cx="12" cy="12" r="10.1" fill="#fff" stroke="#36B37E" stroke-width="2.7"/><path d="M6.9 11.4 L10.8 15.3 L17.2 8.4" fill="none" stroke="#36B37E" stroke-width="2.6" stroke-linecap="round" stroke-linejoin="round"/></svg><svg style="left:1110.48px;top:276.00px" width="24" height="24"><circle cx="12" cy="12" r="10.1" fill="#fff" stroke="#36B37E" stroke-width="2.7"/><path d="M6.9 11.4 L10.8 15.3 L17.2 8.4" fill="none" stroke="#36B37E" stroke-width="2.6" stroke-linecap="round" stroke-linejoin="round"/></svg><svg style="left:1156.35px;top:276.00px" width="24" height="24"><circle cx="12" cy="12" r="11.5" fill="#36B37E"/><path d="M6.9 11.7 L10.8 15.6 L17.4 8.9" fill="none" stroke="#fff" stroke-width="2.7" stroke-linecap="round" stroke-linejoin="round"/></svg><div class="t " style="left:1186.8px;top:279.8px;font-size:15.5px;line-height:15.5px;color:#36B37E;font-weight:400;letter-spacing:0.22px;">Prod</div><div class="a" style="left:999.37px;top:349.56px;width:62.74px;height:3.00px;background:#36B37E"></div><div class="a" style="left:1091.11px;top:349.56px;width:16.87px;height:3.00px;background:#36B37E"></div><svg style="left:972.87px;top:339.06px" width="24" height="24"><circle cx="12" cy="12" r="10.1" fill="#fff" stroke="#36B37E" stroke-width="2.7"/><path d="M6.9 11.4 L10.8 15.3 L17.2 8.4" fill="none" stroke="#36B37E" stroke-width="2.6" stroke-linecap="round" stroke-linejoin="round"/></svg><svg style="left:1064.61px;top:339.06px" width="24" height="24"><circle cx="12" cy="12" r="10.1" fill="#fff" stroke="#36B37E" stroke-width="2.7"/><path d="M6.9 11.4 L10.8 15.3 L17.2 8.4" fill="none" stroke="#36B37E" stroke-width="2.6" stroke-linecap="round" stroke-linejoin="round"/></svg><svg style="left:1110.48px;top:339.06px" width="24" height="24"><circle cx="12" cy="12" r="11.5" fill="#36B37E"/><path d="M6.9 11.7 L10.8 15.6 L17.4 8.9" fill="none" stroke="#fff" stroke-width="2.7" stroke-linecap="round" stroke-linejoin="round"/></svg><div class="t " style="left:1140.9px;top:342.8px;font-size:15.5px;line-height:15.5px;color:#36B37E;font-weight:400;letter-spacing:0.22px;">Prod</div><div class="a" style="left:999.37px;top:412.63px;width:62.74px;height:3.00px;background:#36B37E"></div><div class="a" style="left:1091.11px;top:412.63px;width:16.87px;height:3.00px;background:#36B37E"></div><svg style="left:972.87px;top:402.13px" width="24" height="24"><circle cx="12" cy="12" r="10.1" fill="#fff" stroke="#36B37E" stroke-width="2.7"/><path d="M6.9 11.4 L10.8 15.3 L17.2 8.4" fill="none" stroke="#36B37E" stroke-width="2.6" stroke-linecap="round" stroke-linejoin="round"/></svg><svg style="left:1064.61px;top:402.13px" width="24" height="24"><circle cx="12" cy="12" r="10.1" fill="#fff" stroke="#36B37E" stroke-width="2.7"/><path d="M6.9 11.4 L10.8 15.3 L17.2 8.4" fill="none" stroke="#36B37E" stroke-width="2.6" stroke-linecap="round" stroke-linejoin="round"/></svg><svg style="left:1110.48px;top:402.13px" width="24" height="24"><circle cx="12" cy="12" r="11.5" fill="#36B37E"/><path d="M6.9 11.7 L10.8 15.6 L17.4 8.9" fill="none" stroke="#fff" stroke-width="2.7" stroke-linecap="round" stroke-linejoin="round"/></svg><div class="t " style="left:1140.9px;top:405.9px;font-size:15.5px;line-height:15.5px;color:#36B37E;font-weight:400;letter-spacing:0.22px;">Prod</div><div class="a" style="left:999.37px;top:475.71px;width:62.74px;height:3.00px;background:#36B37E"></div><div class="a" style="left:1091.11px;top:475.71px;width:16.87px;height:3.00px;background:#36B37E"></div><svg style="left:972.87px;top:465.21px" width="24" height="24"><circle cx="12" cy="12" r="10.1" fill="#fff" stroke="#36B37E" stroke-width="2.7"/><path d="M6.9 11.4 L10.8 15.3 L17.2 8.4" fill="none" stroke="#36B37E" stroke-width="2.6" stroke-linecap="round" stroke-linejoin="round"/></svg><svg style="left:1064.61px;top:465.21px" width="24" height="24"><circle cx="12" cy="12" r="10.1" fill="#fff" stroke="#36B37E" stroke-width="2.7"/><path d="M6.9 11.4 L10.8 15.3 L17.2 8.4" fill="none" stroke="#36B37E" stroke-width="2.6" stroke-linecap="round" stroke-linejoin="round"/></svg><svg style="left:1109.48px;top:459.41px" width="26" height="36"><circle cx="13" cy="22.1" r="11.2" fill="#36B37E"/><circle cx="13" cy="17.7" r="12.4" fill="#fff"/><circle cx="13" cy="17.7" r="11.2" fill="#36B37E"/><circle cx="13" cy="13" r="12.4" fill="#fff"/><circle cx="13" cy="13" r="11.2" fill="#36B37E"/><path d="M7.9 12.7 L11.8 16.6 L18.4 9.9" fill="none" stroke="#fff" stroke-width="2.7" stroke-linecap="round" stroke-linejoin="round"/></svg><div class="t " style="left:1140.9px;top:469.0px;font-size:15.5px;line-height:15.5px;color:#36B37E;font-weight:400;letter-spacing:0.22px;">Prod</div><div class="a" style="left:458.00px;top:538.77px;width:7.30px;height:3.00px;background:#36B37E"></div><div class="a" style="left:530.50px;top:538.77px;width:27.24px;height:3.00px;background:#36B37E"></div><div class="a" style="left:586.34px;top:538.77px;width:246.42px;height:3.00px;background:#36B37E"></div><div class="a" style="left:463.30px;top:517.27px;width:69.20px;height:46px;border-radius:23px;background:#fff;box-shadow:0 1px 2px rgba(9,30,66,0.30),0 0 1px rgba(9,30,66,0.32)"></div><svg style="left:475.00px;top:533.48px" width="10" height="14"><path d="M7.3 1.7 L2.4 6.8 L7.3 11.9" fill="none" stroke="#42526E" stroke-width="3.0" stroke-linecap="round" stroke-linejoin="round"/></svg><svg style="left:497.20px;top:528.27px" width="24" height="24"><circle cx="12" cy="12" r="10.1" fill="#fff" stroke="#36B37E" stroke-width="2.7"/><path d="M6.9 11.4 L10.8 15.3 L17.2 8.4" fill="none" stroke="#36B37E" stroke-width="2.6" stroke-linecap="round" stroke-linejoin="round"/></svg><svg style="left:560.04px;top:528.27px" width="24" height="24"><circle cx="12" cy="12" r="10.1" fill="#fff" stroke="#36B37E" stroke-width="2.7"/><path d="M6.9 11.4 L10.8 15.3 L17.2 8.4" fill="none" stroke="#36B37E" stroke-width="2.6" stroke-linecap="round" stroke-linejoin="round"/></svg><svg style="left:835.26px;top:528.27px" width="24" height="24"><circle cx="12" cy="12" r="11.5" fill="#36B37E"/><path d="M6.9 11.7 L10.8 15.6 L17.4 8.9" fill="none" stroke="#fff" stroke-width="2.7" stroke-linecap="round" stroke-linejoin="round"/></svg><div class="t " style="left:865.1px;top:532.1px;font-size:15.5px;line-height:15.5px;color:#36B37E;font-weight:400;letter-spacing:0.22px;">Prod</div><div class="a" style="left:458.00px;top:601.84px;width:7.30px;height:3.00px;background:#36B37E"></div><div class="a" style="left:530.50px;top:601.84px;width:27.24px;height:3.00px;background:#36B37E"></div><div class="a" style="left:586.34px;top:601.84px;width:246.42px;height:3.00px;background:#36B37E"></div><div class="a" style="left:463.30px;top:580.34px;width:69.20px;height:46px;border-radius:23px;background:#fff;box-shadow:0 1px 2px rgba(9,30,66,0.30),0 0 1px rgba(9,30,66,0.32)"></div><svg style="left:475.00px;top:596.54px" width="10" height="14"><path d="M7.3 1.7 L2.4 6.8 L7.3 11.9" fill="none" stroke="#42526E" stroke-width="3.0" stroke-linecap="round" stroke-linejoin="round"/></svg><svg style="left:497.20px;top:591.34px" width="24" height="24"><circle cx="12" cy="12" r="10.1" fill="#fff" stroke="#36B37E" stroke-width="2.7"/><path d="M6.9 11.4 L10.8 15.3 L17.2 8.4" fill="none" stroke="#36B37E" stroke-width="2.6" stroke-linecap="round" stroke-linejoin="round"/></svg><svg style="left:560.04px;top:591.34px" width="24" height="24"><circle cx="12" cy="12" r="10.1" fill="#fff" stroke="#36B37E" stroke-width="2.7"/><path d="M6.9 11.4 L10.8 15.3 L17.2 8.4" fill="none" stroke="#36B37E" stroke-width="2.6" stroke-linecap="round" stroke-linejoin="round"/></svg><svg style="left:835.26px;top:591.34px" width="24" height="24"><circle cx="12" cy="12" r="11.5" fill="#36B37E"/><path d="M6.9 11.7 L10.8 15.6 L17.4 8.9" fill="none" stroke="#fff" stroke-width="2.7" stroke-linecap="round" stroke-linejoin="round"/></svg><div class="t " style="left:865.1px;top:595.1px;font-size:15.5px;line-height:15.5px;color:#36B37E;font-weight:400;letter-spacing:0.22px;">Prod</div><div class="a" style="left:463.30px;top:643.41px;width:69.20px;height:46px;border-radius:23px;background:#fff;box-shadow:0 1px 2px rgba(9,30,66,0.30),0 0 1px rgba(9,30,66,0.32)"></div><svg style="left:475.00px;top:659.62px" width="10" height="14"><path d="M7.3 1.7 L2.4 6.8 L7.3 11.9" fill="none" stroke="#42526E" stroke-width="3.0" stroke-linecap="round" stroke-linejoin="round"/></svg><svg style="left:497.20px;top:654.41px" width="24" height="24"><circle cx="12" cy="12" r="11.5" fill="#36B37E"/><path d="M6.9 11.7 L10.8 15.6 L17.4 8.9" fill="none" stroke="#fff" stroke-width="2.7" stroke-linecap="round" stroke-linejoin="round"/></svg><div class="a" style="left:463.30px;top:706.49px;width:69.20px;height:46px;border-radius:23px;background:#fff;box-shadow:0 1px 2px rgba(9,30,66,0.30),0 0 1px rgba(9,30,66,0.32)"></div><svg style="left:475.00px;top:722.69px" width="10" height="14"><path d="M7.3 1.7 L2.4 6.8 L7.3 11.9" fill="none" stroke="#42526E" stroke-width="3.0" stroke-linecap="round" stroke-linejoin="round"/></svg><svg style="left:497.20px;top:717.49px" width="24" height="24"><circle cx="12" cy="12" r="11.5" fill="#36B37E"/><path d="M6.9 11.7 L10.8 15.6 L17.4 8.9" fill="none" stroke="#fff" stroke-width="2.7" stroke-linecap="round" stroke-linejoin="round"/></svg><div class="a" style="left:463.30px;top:769.56px;width:69.20px;height:46px;border-radius:23px;background:#fff;box-shadow:0 1px 2px rgba(9,30,66,0.30),0 0 1px rgba(9,30,66,0.32)"></div><svg style="left:475.00px;top:785.76px" width="10" height="14"><path d="M7.3 1.7 L2.4 6.8 L7.3 11.9" fill="none" stroke="#42526E" stroke-width="3.0" stroke-linecap="round" stroke-linejoin="round"/></svg><svg style="left:497.20px;top:780.56px" width="24" height="24"><circle cx="12" cy="12" r="11.5" fill="#36B37E"/><path d="M6.9 11.7 L10.8 15.6 L17.4 8.9" fill="none" stroke="#fff" stroke-width="2.7" stroke-linecap="round" stroke-linejoin="round"/></svg><div class="a" style="left:463.30px;top:832.63px;width:69.20px;height:46px;border-radius:23px;background:#fff;box-shadow:0 1px 2px rgba(9,30,66,0.30),0 0 1px rgba(9,30,66,0.32)"></div><svg style="left:475.00px;top:848.83px" width="10" height="14"><path d="M7.3 1.7 L2.4 6.8 L7.3 11.9" fill="none" stroke="#42526E" stroke-width="3.0" stroke-linecap="round" stroke-linejoin="round"/></svg><svg style="left:497.20px;top:843.63px" width="24" height="24"><circle cx="12" cy="12" r="11.5" fill="#36B37E"/><path d="M6.9 11.7 L10.8 15.6 L17.4 8.9" fill="none" stroke="#fff" stroke-width="2.7" stroke-linecap="round" stroke-linejoin="round"/></svg><div class="a" style="left:463.30px;top:895.69px;width:69.20px;height:46px;border-radius:23px;background:#fff;box-shadow:0 1px 2px rgba(9,30,66,0.30),0 0 1px rgba(9,30,66,0.32)"></div><svg style="left:475.00px;top:911.89px" width="10" height="14"><path d="M7.3 1.7 L2.4 6.8 L7.3 11.9" fill="none" stroke="#42526E" stroke-width="3.0" stroke-linecap="round" stroke-linejoin="round"/></svg><svg style="left:497.20px;top:906.69px" width="24" height="24"><circle cx="12" cy="12" r="11.5" fill="#36B37E"/><path d="M6.9 11.7 L10.8 15.6 L17.4 8.9" fill="none" stroke="#fff" stroke-width="2.7" stroke-linecap="round" stroke-linejoin="round"/></svg><div class="a" style="left:463.30px;top:958.77px;width:69.20px;height:46px;border-radius:23px;background:#fff;box-shadow:0 1px 2px rgba(9,30,66,0.30),0 0 1px rgba(9,30,66,0.32)"></div><svg style="left:475.00px;top:974.97px" width="10" height="14"><path d="M7.3 1.7 L2.4 6.8 L7.3 11.9" fill="none" stroke="#42526E" stroke-width="3.0" stroke-linecap="round" stroke-linejoin="round"/></svg><svg style="left:497.20px;top:969.77px" width="24" height="24"><circle cx="12" cy="12" r="11.5" fill="#36B37E"/><path d="M6.9 11.7 L10.8 15.6 L17.4 8.9" fill="none" stroke="#fff" stroke-width="2.7" stroke-linecap="round" stroke-linejoin="round"/></svg></div><div class="a" style="left:1565px;top:1204px;width:432px;height:51px;background:#fff;border-radius:6px;box-shadow:0 2px 4px rgba(9,30,66,0.18),0 0 1px rgba(9,30,66,0.3)"></div><div class="t " style="left:1582.8px;top:1221.9px;font-size:15.5px;line-height:15.5px;color:#6B778C;font-weight:700;letter-spacing:-0.2px;">KEY</div><svg style="left:1637.80px;top:1217.60px" width="24" height="24"><circle cx="12" cy="12" r="10.1" fill="#fff" stroke="#36B37E" stroke-width="2.7"/><path d="M6.9 11.4 L10.8 15.3 L17.2 8.4" fill="none" stroke="#36B37E" stroke-width="2.6" stroke-linecap="round" stroke-linejoin="round"/></svg><svg style="left:1844.00px;top:1217.60px" width="24" height="24"><circle cx="12" cy="12" r="11.5" fill="#36B37E"/><path d="M6.9 11.7 L10.8 15.6 L17.4 8.9" fill="none" stroke="#fff" stroke-width="2.7" stroke-linecap="round" stroke-linejoin="round"/></svg><div class="t " style="left:1670.5px;top:1220.0px;font-size:20px;line-height:20px;color:#36B37E;font-weight:400;letter-spacing:0.85px;">Non-production</div><div class="t " style="left:1875.5px;top:1220.0px;font-size:20px;line-height:20px;color:#36B37E;font-weight:400;letter-spacing:0.7px;">Production</div></body></html>
